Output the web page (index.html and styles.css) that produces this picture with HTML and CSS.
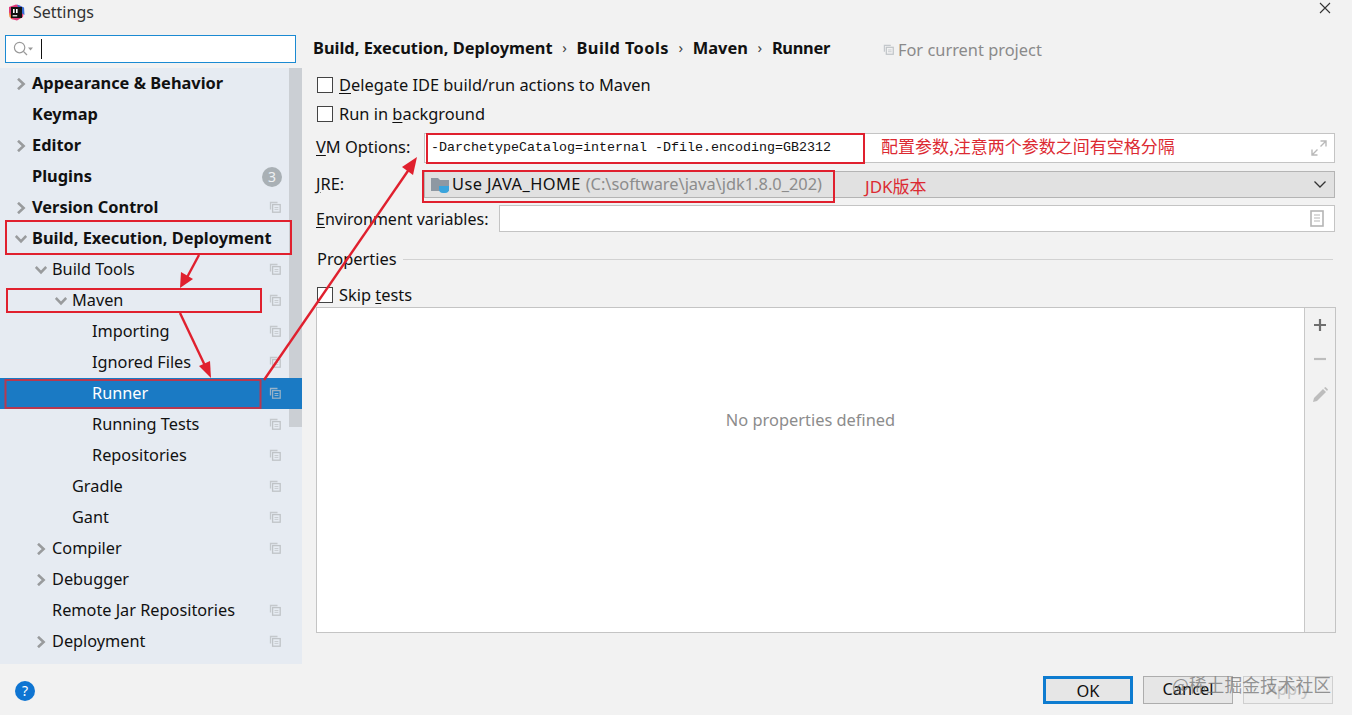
FILE: index.html
```html
<!DOCTYPE html>
<html lang="en">
<head>
<meta charset="utf-8">
<title>Settings</title>
<link rel="stylesheet" href="styles.css">
</head>
<body>
<svg class="defs" width="0" height="0" aria-hidden="true">
  <symbol id="copy" viewBox="0 0 12 12">
    <path d="M1.5 8.5V1.5H8.5" fill="none" stroke="#c4c8cc" stroke-width="1.3"/>
    <rect x="3.6" y="3.6" width="7.6" height="7.6" fill="none" stroke="#bfc3c7" stroke-width="1.3"/>
    <path d="M5.5 6.5H9.4M5.5 8.4H9.4" stroke="#c8ccd0" stroke-width="1"/>
  </symbol>
  <symbol id="right" viewBox="0 0 12 12"><path d="M3 0.8L8.6 6L3 11.2" fill="none" stroke="#999b9d" stroke-width="2.6"/></symbol>
  <symbol id="down" viewBox="0 0 12 12"><path d="M0.8 3L6 8.4L11.2 3" fill="none" stroke="#999b9d" stroke-width="2.6"/></symbol>
</svg>
<div class="dialog">
  <header class="titlebar">
    <svg class="logo" width="17" height="17" viewBox="0 0 17 17">
      <path d="M1 3L8 0.5L13 2L16 6L15 13L9 16.5L3 15L1 9Z" fill="#e0397a"/>
      <path d="M9 0.5L16 3.5L16.5 11L12 8Z" fill="#3a6fd8"/>
      <path d="M1 8L5 15.5L1.5 13Z" fill="#f28a2e"/>
      <rect x="3" y="3" width="11" height="11" fill="#111"/>
      <rect x="5" y="5" width="1.6" height="4" fill="#fff"/>
      <rect x="8" y="5" width="1.6" height="4" fill="#fff"/>
      <rect x="4.6" y="11.2" width="4.6" height="1.2" fill="#fff"/>
    </svg>
    <span class="title">Settings</span>
    <svg class="close" width="12" height="12" viewBox="0 0 12 12"><path d="M1 1L11 11M11 1L1 11" stroke="#333" stroke-width="1.1"/></svg>
  </header>
  <div class="main">
    <aside class="side">
      <div class="search">
        <svg width="22" height="16" viewBox="0 0 22 16"><circle cx="6.6" cy="6.6" r="5.2" fill="none" stroke="#9a9a9a" stroke-width="1.2"/><path d="M10.4 10.4L14 14" stroke="#9a9a9a" stroke-width="1.3"/><path d="M15 6.5H20L17.5 9.5Z" fill="#9a9a9a"/></svg>
        <span class="caret"></span>
      </div>
      <div class="treewrap">
        <ul class="tree">
          <li class="row b l0"><svg class="arr"><use href="#right"/></svg><span class="lbl">Appearance &amp; Behavior</span></li>
          <li class="row b l0"><span class="noarr"></span><span class="lbl">Keymap</span></li>
          <li class="row b l0"><svg class="arr"><use href="#right"/></svg><span class="lbl">Editor</span></li>
          <li class="row b l0"><span class="noarr"></span><span class="lbl">Plugins</span><span class="badge">3</span></li>
          <li class="row b l0"><svg class="arr"><use href="#right"/></svg><span class="lbl">Version Control</span><svg class="cp"><use href="#copy"/></svg></li>
          <li class="row b l0"><svg class="arr"><use href="#down"/></svg><span class="lbl">Build, Execution, Deployment</span></li>
          <li class="row l1"><svg class="arr"><use href="#down"/></svg><span class="lbl">Build Tools</span><svg class="cp"><use href="#copy"/></svg></li>
          <li class="row l2"><svg class="arr"><use href="#down"/></svg><span class="lbl">Maven</span><svg class="cp"><use href="#copy"/></svg></li>
          <li class="row l3"><span class="noarr"></span><span class="lbl">Importing</span><svg class="cp"><use href="#copy"/></svg></li>
          <li class="row l3"><span class="noarr"></span><span class="lbl">Ignored Files</span><svg class="cp"><use href="#copy"/></svg></li>
          <li class="row l3 sel"><span class="noarr"></span><span class="lbl">Runner</span><svg class="cp"><use href="#copy"/></svg></li>
          <li class="row l3"><span class="noarr"></span><span class="lbl">Running Tests</span><svg class="cp"><use href="#copy"/></svg></li>
          <li class="row l3"><span class="noarr"></span><span class="lbl">Repositories</span><svg class="cp"><use href="#copy"/></svg></li>
          <li class="row l2"><span class="noarr"></span><span class="lbl">Gradle</span><svg class="cp"><use href="#copy"/></svg></li>
          <li class="row l2"><span class="noarr"></span><span class="lbl">Gant</span><svg class="cp"><use href="#copy"/></svg></li>
          <li class="row l1"><svg class="arr"><use href="#right"/></svg><span class="lbl">Compiler</span><svg class="cp"><use href="#copy"/></svg></li>
          <li class="row l1"><svg class="arr"><use href="#right"/></svg><span class="lbl">Debugger</span></li>
          <li class="row l1"><span class="noarr"></span><span class="lbl">Remote Jar Repositories</span><svg class="cp"><use href="#copy"/></svg></li>
          <li class="row l1"><svg class="arr"><use href="#right"/></svg><span class="lbl">Deployment</span><svg class="cp"><use href="#copy"/></svg></li>
        </ul>
        <div class="scrollbar"><div class="thumb"></div></div>
      </div>
    </aside>
    <section class="content">
      <div class="crumbs">
        <b>Build, Execution, Deployment</b><i>›</i><b class="wide">Build Tools</b><i>›</i><b>Maven</b><i>›</i><b class="tight">Runner</b>
        <span class="scope"><svg width="11" height="11"><use href="#copy"/></svg>For current project</span>
      </div>
      <label class="check first"><span class="box"></span><span class="ctext"><u>D</u>elegate IDE build/run actions to Maven</span></label>
      <label class="check second"><span class="box"></span><span class="ctext">Run in <u>b</u>ackground</span></label>
      <div class="field vm">
        <span class="flabel"><u>V</u>M Options:</span>
        <div class="input">
          <span class="mono">-DarchetypeCatalog=internal -Dfile.encoding=GB2312</span>
          <span class="note">配置参数,注意两个参数之间有空格分隔</span>
          <svg class="expand" width="16" height="16" viewBox="0 0 16 16"><path d="M9.5 1H15V6.5M15 1L9.5 6.5M6.5 15H1V9.5M1 15L6.5 9.5" fill="none" stroke="#b9b9b9" stroke-width="1.4"/></svg>
        </div>
      </div>
      <div class="field jre">
        <span class="flabel"><u>J</u>RE:</span>
        <div class="combo">
          <svg class="folder" width="20" height="18" viewBox="0 0 20 18"><path d="M0 2H7L9 4H18V15H0Z" fill="#8e98a2"/><path d="M8 10H18V13A4 4 0 0 1 14 17H12A4 4 0 0 1 8 13Z" fill="#3aa4dc"/></svg>
          <span class="use">Use JAVA_HOME</span><span class="path">(C:\software\java\jdk1.8.0_202)</span>
          <span class="jdk">JDK版本</span>
          <svg class="chev" width="14" height="9" viewBox="0 0 14 9"><path d="M1.5 1.5L7 7L12.5 1.5" fill="none" stroke="#333" stroke-width="1.3"/></svg>
        </div>
      </div>
      <div class="field env">
        <span class="flabel"><u>E</u>nvironment variables:</span>
        <div class="input env-in">
          <svg class="doc" width="14" height="17" viewBox="0 0 14 17"><rect x="1" y="1" width="12" height="15" fill="none" stroke="#b5b5b5" stroke-width="1.6"/><path d="M4 5H10M4 8H10M4 11H10" stroke="#b5b5b5" stroke-width="1.1"/></svg>
        </div>
      </div>
      <div class="props"><span class="ptext">Properties</span><span class="rule"></span></div>
      <label class="check skip"><span class="box"></span><span class="ctext">Skip <u>t</u>ests</span></label>
      <div class="table">
        <div class="empty">No properties defined</div>
        <div class="tools">
          <svg width="14" height="14" viewBox="0 0 14 14"><path d="M7 1V13M1 7H13" stroke="#6e6e6e" stroke-width="2.2"/></svg>
          <svg width="14" height="14" viewBox="0 0 14 14"><path d="M1 7H13" stroke="#bdbdbd" stroke-width="2.2"/></svg>
          <svg width="18" height="18" viewBox="0 0 18 18"><path d="M2 16L3 12L12 3L15 6L6 15Z" fill="#bdbdbd"/><path d="M13 2L14.5 1L17 3.5L16 5Z" fill="#bdbdbd"/></svg>
        </div>
      </div>
    </section>
  </div>
  <footer class="foot">
    <span class="help">?</span>
    <div class="btns">
      <button class="btn ok">OK</button>
      <button class="btn">Cancel</button>
      <button class="btn off">Apply</button>
    </div>
  </footer>
</div>
<svg class="marks" width="1352" height="715" viewBox="0 0 1352 715" aria-hidden="true">
  <g fill="none" stroke="#e0202e" stroke-width="2">
    <rect x="6" y="221" width="285" height="33"/>
    <rect x="7" y="289" width="254" height="23"/>
    <rect x="5.500" y="380" width="255" height="28" stroke="#b8384f"/>
    <rect x="427" y="134" width="437" height="29"/>
    <rect x="423" y="171" width="411" height="31"/>
  </g>
  <g stroke="#e0202e" stroke-width="2.4" fill="#e0202e">
    <path d="M199 255L184 283" fill="none"/><path d="M180 288L181 272L193 279Z" stroke="none"/>
    <path d="M180 313L208 372" fill="none"/><path d="M211 378L199 366L210 361Z" stroke="none"/>
    <path d="M264 380L412 165" fill="none"/><path d="M417 157L413 175L402 167Z" stroke="none"/>
  </g>
</svg>
<div class="wm">@稀土掘金技术社区</div>
</body>
</html>
```
FILE: styles.css
```css
* { box-sizing: border-box; }
html, body { margin: 0; padding: 0; }
body { width: 1352px; height: 715px; overflow: hidden; background: #f2f2f2; color: #111; font-family: "Noto Sans", "Noto Sans CJK SC", sans-serif; font-size: 16.4px; position: relative; }
.defs { position: absolute; }
.dialog { width: 1352px; height: 715px; display: flex; flex-direction: column; }
.titlebar { height: 35px; flex: none; display: flex; align-items: flex-start; padding: 4px 21px 0 8px; }
.logo { flex: none; margin-right: 8px; }
.title { font-size: 16px; line-height: 17px; color: #333; }
.close { margin: -2px 0 0 auto; }
.main { flex: 1; display: flex; min-height: 0; }
.side { width: 302px; flex: none; display: flex; flex-direction: column; height: 629px; }
.search { margin-left: 5px; width: 291px; height: 28px; border: 1px solid #1b8ad2; background: #fff; display: flex; align-items: center; padding-left: 7px; gap: 5px; flex: none; }
.caret { width: 1px; height: 20px; background: #111; margin-left: 1px; }
.treewrap { margin-top: 5px; flex: 1; background: #e6ebf2; display: flex; position: relative; }
.tree { list-style: none; margin: 0; padding: 0; width: 100%; }
.row { height: 31px; display: flex; align-items: center; position: relative; padding-right: 21px; font-size: 16.3px; }
.row .lbl { line-height: 31px; white-space: nowrap; }
.b { font-size: 16.4px; }
.b .lbl { font-weight: 700; position: relative; top: -1px; }
.arr, .noarr { width: 12px; height: 12px; flex: none; margin-right: 5px; }
.l0 { padding-left: 15px; }
.l1 { padding-left: 35px; }
.l2 { padding-left: 55px; }
.l3 { padding-left: 75px; }
.cp { width: 12px; height: 12px; margin-left: auto; margin-bottom: 2px; flex: none; }
.sel { background: #1a7ac4; color: #fff; z-index: 2; }
.sel .cp { opacity: .75; }
.badge { margin-left: auto; margin-right: -1px; width: 20px; height: 20px; border-radius: 50%; background: #a9b0b5; color: #eef1f3; font-size: 14px; line-height: 20px; text-align: center; font-weight: 400; }
.scrollbar { position: absolute; right: 0; top: 0; bottom: 0; width: 13px; pointer-events: none; z-index: 1; }
.thumb { height: 359px; background: rgba(180, 184, 188, .55); }
.content { flex: 1; min-width: 0; padding-left: 14px; position: relative; }
.crumbs { height: 24px; margin-left: -3px; display: flex; align-items: center; white-space: nowrap; }
.crumbs i { font-style: normal; width: 24px; text-align: center; color: #444; font-size: 15px; }
.wide { letter-spacing: .4px; }
.tight { letter-spacing: -.3px; }
.scope { margin-left: 53px; color: #8a8a8a; display: flex; align-items: center; gap: 4px; position: relative; top: 2px; }
.check { display: flex; align-items: center; gap: 6px; height: 20px; margin-left: 1px; }
.ctext, .ptext { position: relative; top: -1px; }
.check u, .flabel u { text-underline-offset: 2px; }
.box { width: 16px; height: 16px; border: 1px solid #444; background: #fff; flex: none; }
.first { margin-top: 16px; }
.second { margin-top: 9px; }
.field { display: flex; align-items: center; margin-right: 17px; }
.flabel { white-space: nowrap; }
.vm { margin-top: 9px; height: 30px; }
.vm .flabel { width: 108px; flex: none; padding-bottom: 4px; }
.jre .flabel { width: 108px; flex: none; padding-bottom: 2px; }
.input { flex: 1; height: 100%; background: #fff; border: 1px solid #c4c4c4; display: flex; align-items: center; position: relative; }
.mono { font-family: "Liberation Mono", monospace; font-size: 13.33px; margin-left: 6px; white-space: nowrap; position: relative; top: -1px; }
.note { color: #dc2a32; font-size: 17px; margin-left: 50px; white-space: nowrap; font-family: "Noto Sans CJK SC", sans-serif; position: relative; top: -3px; }
.expand { position: absolute; right: 7px; top: 6px; }
.jre { margin-top: 8px; height: 27px; }
.combo { flex: 1; height: 100%; background: #e1e1e1; border: 1px solid #b4b4b4; display: flex; align-items: center; padding-left: 6px; white-space: nowrap; position: relative; }
.folder { margin-right: 1px; flex: none; }
.use { letter-spacing: .4px; position: relative; top: -1px; }
.path { color: #8c8c8c; margin-left: 5px; position: relative; top: -1px; }
.jdk { color: #dc2a32; position: absolute; left: 440px; top: 1px; font-size: 17px; font-family: "Noto Sans", "Noto Sans CJK SC", sans-serif; }
.chev { position: absolute; right: 7px; top: 8px; }
.env { margin-top: 7px; height: 27px; }
.env .flabel { width: 183px; flex: none; font-size: 16px; }
.env-in { justify-content: flex-end; padding-right: 10px; }
.props { margin-top: 14px; height: 26px; display: flex; align-items: center; margin-right: 19px; margin-left: 1px; gap: 6px; }
.rule { flex: 1; height: 1px; background: #d2d2d2; }
.skip { margin-top: 13px; }
.table { margin-top: 2px; margin-right: 16px; height: 326px; border: 1px solid #c4c4c4; display: flex; background: #fff; }
.empty { flex: 1; display: flex; justify-content: center; padding-top: 100px; color: #8c8c8c; }
.tools { width: 31px; flex: none; background: #f2f2f2; border-left: 1px solid #c8c8c8; display: flex; flex-direction: column; align-items: center; padding-top: 10px; gap: 20px; }
.foot { height: 51px; flex: none; display: flex; align-items: flex-start; padding: 0 19px 0 15px; }
.help { width: 20px; height: 20px; margin-top: 17px; border-radius: 50%; background: #0f75d2; color: #fff; font-size: 14px; line-height: 20px; text-align: center; }
.btns { margin-left: auto; margin-top: 12px; display: flex; gap: 10px; }
.btn { width: 90px; height: 28px; font: inherit; background: #e6e6e6; border: 1px solid #adadad; color: #111; padding: 0 0 3px; }
.ok { border: 3px solid #0e7cd0; }
.off { background: #eeeeee; color: #c4c4c4; border-color: #cfcfcf; }
.marks { position: absolute; left: 0; top: 0; pointer-events: none; z-index: 3; }
.wm { position: absolute; left: 1172px; top: 671px; font-size: 17.8px; color: rgba(110, 110, 110, .72); white-space: nowrap; font-family: "Noto Sans CJK SC", sans-serif; z-index: 3; }
```
